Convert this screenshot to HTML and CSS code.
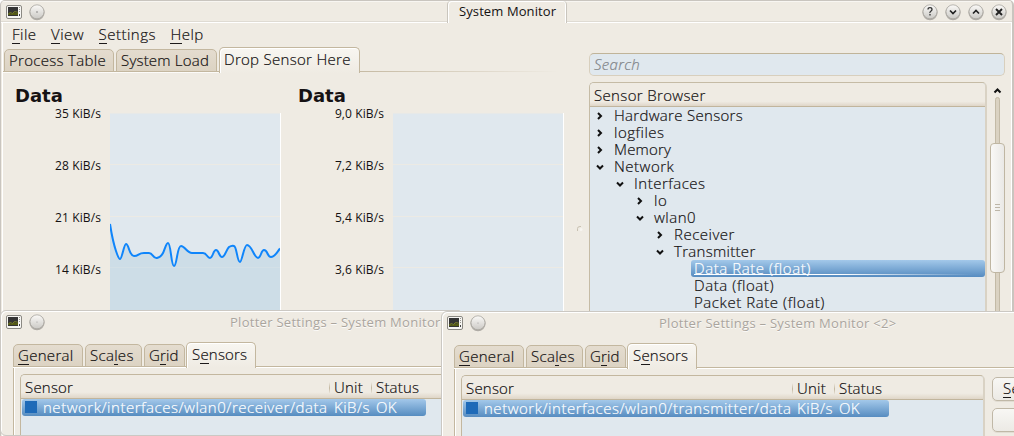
FILE: index.html
```html
<!DOCTYPE html>
<html lang="en">
<head>
<meta charset="utf-8">
<title>System Monitor</title>
<link rel="stylesheet" href="styles.css">
</head>
<body>
<svg class="defs" width="0" height="0">
  <defs>
    <linearGradient id="ball" x1="0" y1="0" x2="0" y2="1"><stop offset="0" stop-color="#fbfaf8"/><stop offset="1" stop-color="#cbc9c5"/></linearGradient>
    <symbol id="app" viewBox="0 0 16 14">
      <rect x=".5" y=".5" width="15" height="13" rx="1.5" fill="#f7f6f3" stroke="#8b8983"/>
      <rect x="2" y="2" width="10" height="9" fill="#343434"/>
      <path d="M2 9l2-1 2 1 2-2 2 1 2-1v3H2z" fill="#565c16"/>
      <path d="M2.5 8.5l2-1 2 1 2-2 3 .5" fill="none" stroke="#858a28" stroke-width=".8"/>
      <path d="M13.5 2v6" stroke="#98968f" stroke-dasharray="1 1"/><path d="M13.5 9v2" stroke="#444"/>
    </symbol>
    <symbol id="round" viewBox="0 0 18 18">
      <circle cx="9" cy="9.6" r="7.6" fill="#8e8b85" opacity=".65"/>
      <circle cx="9" cy="8.8" r="7" fill="url(#ball)" stroke="#aaa7a1" stroke-width=".8"/>
    </symbol>
    <symbol id="right" viewBox="0 0 8 8"><path d="M2 1l3 3-3 3" fill="none" stroke="#111" stroke-width="2"/></symbol>
    <symbol id="down" viewBox="0 0 8 8"><path d="M1 2.5l3 3 3-3" fill="none" stroke="#111" stroke-width="2"/></symbol>
  </defs>
</svg>
<main class="desktop">
  <section class="window main">
    <header class="titlebar">
      <svg class="app"><use href="#app"/></svg>
      <svg class="ball"><use href="#round"/><circle cx="9" cy="9" r=".7" fill="#666"/></svg>
      <div class="title-tab"><span>System Monitor</span></div>
      <div class="controls">
        <svg class="ball"><use href="#round"/><path d="M7 6.5q0-1.8 2-1.8t2 1.8q0 1-1.2 1.7T9 10M9 11v1.5" fill="none" stroke="#333" stroke-width="1.3"/></svg>
        <svg class="ball"><use href="#round"/><path d="M6 7.5l3 3 3-3" fill="none" stroke="#222" stroke-width="1.7"/></svg>
        <svg class="ball"><use href="#round"/><path d="M6 10.5l3-3 3 3" fill="none" stroke="#222" stroke-width="1.7"/></svg>
        <svg class="ball"><use href="#round"/><path d="M6 6l6 6M12 6l-6 6" fill="none" stroke="#222" stroke-width="1.9"/></svg>
      </div>
    </header>
    <div class="body">
      <div class="left">
        <nav class="menu"><span><u>F</u>ile</span><span><u>V</u>iew</span><span><u>S</u>ettings</span><span><u>H</u>elp</span></nav>
        <div class="tabs main-tabs">
          <div class="tab t1">Process Table</div><div class="tab t2">System Load</div><div class="tab on t3">Drop Sensor Here</div>
        </div>
        <div class="charts">
          <article class="chart">
            <h2>Data</h2>
            <div class="plot-row">
              <div class="axis"><span>35 KiB/s</span><span>28 KiB/s</span><span>21 KiB/s</span><span>14 KiB/s</span></div>
              <svg class="plot" width="171" height="200">
                <rect y=".5" width="170" height="200" fill="#e0e8ee"/>
                <path d="M0 51.5h170M0 103.5h170M0 154.5h170" stroke="#eceae4"/>
                <path d="M0 111C2 124 4 132 6 138C8 144 9 146 10 146C12 146 14 131 16 131C19 131 19 143 24 143C29 143 28 140 34 140H39C43 140 43 146 47 145Q51 144 53 140C55 136 56 130 58 130C61 130 61 153 64 153C67 153 67 133 71 133C75 133 77 140 82 140H93C97 140 97 145 100 145C103 145 103 137 106 137C109 137 109 144 112 144C115 144 116 137 119 134Q122 132 124 133C127 134 127 149 130 149C132 149 134 132 137 132C142 132 144 145 148 145C151 145 151 137 154 137C158 137 157 144 161 144C165 144 167 139 170 135.500V200H0z" fill="#cddde7"/>
                <path d="M0 154.500h170" stroke="#d3e0e7"/>
                <path d="M0 111C2 124 4 132 6 138C8 144 9 146 10 146C12 146 14 131 16 131C19 131 19 143 24 143C29 143 28 140 34 140H39C43 140 43 146 47 145Q51 144 53 140C55 136 56 130 58 130C61 130 61 153 64 153C67 153 67 133 71 133C75 133 77 140 82 140H93C97 140 97 145 100 145C103 145 103 137 106 137C109 137 109 144 112 144C115 144 116 137 119 134Q122 132 124 133C127 134 127 149 130 149C132 149 134 132 137 132C142 132 144 145 148 145C151 145 151 137 154 137C158 137 157 144 161 144C165 144 167 139 170 135.500" fill="none" stroke="#0f85fb" stroke-width="2"/>
                <path d="M170.500 0v200" stroke="#fff"/>
              </svg>
            </div>
          </article>
          <article class="chart">
            <h2>Data</h2>
            <div class="plot-row">
              <div class="axis"><span>9,0 KiB/s</span><span>7,2 KiB/s</span><span>5,4 KiB/s</span><span>3,6 KiB/s</span></div>
              <svg class="plot" width="171" height="200">
                <rect y=".5" width="170" height="200" fill="#e0e8ee"/>
                <path d="M0 51.500h170M0 103.500h170M0 154.500h170" stroke="#eceae4"/>
                <path d="M170.500 0v200" stroke="#fff"/>
              </svg>
            </div>
          </article>
        </div>
      </div>
      <svg class="splitter" width="12" height="8"><path d="M1.500 6V3.500q0-2 2.500-2h1" fill="none" stroke="#c9c2b2"/><circle cx="5" cy="4.500" r="1.500" fill="#f7f5f1"/></svg>
      <div class="browser">
        <div class="search">Search</div>
        <div class="tree-area">
          <div class="tree">
            <div class="tree-head">Sensor Browser</div>
            <div class="row d0"><svg><use href="#right"/></svg><span class="r1">Hardware Sensors</span></div>
            <div class="row d0"><svg><use href="#right"/></svg><span class="r2">logfiles</span></div>
            <div class="row d0"><svg><use href="#right"/></svg><span class="r3">Memory</span></div>
            <div class="row d0"><svg><use href="#down"/></svg><span class="r4">Network</span></div>
            <div class="row d1"><svg><use href="#down"/></svg><span class="r5">Interfaces</span></div>
            <div class="row d2"><svg><use href="#right"/></svg><span>lo</span></div>
            <div class="row d2"><svg><use href="#down"/></svg><span class="r6">wlan0</span></div>
            <div class="row d3"><svg><use href="#right"/></svg><span class="r7">Receiver</span></div>
            <div class="row d3"><svg><use href="#down"/></svg><span class="r8">Transmitter</span></div>
            <div class="row leaf sel"><span class="r9">Data Rate (float)</span></div>
            <div class="row leaf"><span class="r10">Data (float)</span></div>
            <div class="row leaf"><span class="r11">Packet Rate (float)</span></div>
          </div>
          <svg class="scroll" width="20" height="232">
            <defs><linearGradient id="th"><stop offset="0" stop-color="#faf9f7"/><stop offset="1" stop-color="#e9e8e5"/></linearGradient></defs>
            <path d="M5.500 10.500l3-3 3 3" fill="none" stroke="#111" stroke-width="2"/>
            <rect x="6.500" y="15.500" width="4" height="230" rx="2" fill="#dad2c2" stroke="#c3baa6"/>
            <rect x="1.500" y="61.500" width="14" height="129" rx="3.500" fill="url(#th)" stroke="#bfb6a2"/>
            <path d="M6 122.500h5M6 125.500h5M6 128.500h5" stroke="#bdb6a8"/>
          </svg>
        </div>
      </div>
      <svg class="edge" width="3" height="12"><path d="M1.500 1v10" stroke="#777" stroke-dasharray="1 2"/></svg>
    </div>
  </section>

  <section class="window dialog first">
    <header class="dialog-title">
      <svg class="app"><use href="#app"/></svg>
      <svg class="ball"><use href="#round"/><circle cx="9" cy="9" r=".6" fill="#999"/></svg>
      <span>Plotter Settings – System Monitor</span>
    </header>
    <div class="tabs dialog-tabs">
      <div class="tab g"><u>G</u>eneral</div><div class="tab s">Sca<u>l</u>es</div><div class="tab i">G<u>r</u>id</div><div class="tab on n">S<u>e</u>nsors</div>
    </div>
    <div class="page">
      <div class="list">
        <div class="list-head"><span class="c-name">Sensor</span><span class="c-unit">Unit</span><span class="c-status">Status</span></div>
        <div class="item"><i></i><span class="path">network/interfaces/wlan0/receiver/data</span><span class="unit">KiB/s</span><span class="ok">OK</span></div>
      </div>
    </div>
  </section>

  <section class="window dialog second">
    <header class="dialog-title">
      <svg class="app"><use href="#app"/></svg>
      <svg class="ball"><use href="#round"/><circle cx="9" cy="9" r=".6" fill="#999"/></svg>
      <span>Plotter Settings – System Monitor &lt;2&gt;</span>
    </header>
    <div class="tabs dialog-tabs">
      <div class="tab g"><u>G</u>eneral</div><div class="tab s">Sca<u>l</u>es</div><div class="tab i">G<u>r</u>id</div><div class="tab on n">S<u>e</u>nsors</div>
    </div>
    <div class="page">
      <div class="list">
        <div class="list-head"><span class="c-name">Sensor</span><span class="c-unit">Unit</span><span class="c-status">Status</span></div>
        <div class="item"><i></i><span class="path">network/interfaces/wlan0/transmitter/data</span><span class="unit">KiB/s</span><span class="ok">OK</span></div>
      </div>
      <div class="buttons"><div class="button"><u>S</u>e</div><div class="button"></div></div>
    </div>
  </section>
</main>
</body>
</html>
```
FILE: styles.css
```css
* { box-sizing: border-box; }
body { margin: 0; background: #efebe3; color: #141112; font: 300 15px/17px "Open Sans", "Noto Sans", sans-serif; letter-spacing: .3px; -webkit-text-stroke: .2px; }
.defs { display: block; }
svg { flex: none; }
u { text-decoration: none; background: linear-gradient(#1d1a1a, #1d1a1a) 0 100% / 100% 1px no-repeat; padding-bottom: 0; }
.desktop { position: relative; width: 1014px; height: 436px; overflow: hidden; background: #fff; }
.window { position: absolute; overflow: hidden; background: #efebe3; white-space: nowrap; }
.main { left: 0; top: 0; width: 1014px; height: 450px; border: 1px solid #c9c5bf; border-right-width: 2px; border-radius: 5px; }
.app { width: 16px; height: 14px; }
.ball { width: 18px; height: 18px; }

.titlebar { display: flex; height: 22px; padding: 0 2px 0 5px; border-bottom: 1px solid #fff; box-shadow: inset 0 -1px #dfdbd3, inset 0 1px #f8f6f2; }
.titlebar > .app { margin: 4px 6px 0 0; }
.titlebar .ball { margin-top: 2px; }
.title-tab { width: 120px; height: 22px; margin: 0 auto 0 401px; padding-left: 11px; border: 1px solid #c9c5bd; border-width: 0 1px; border-radius: 4px 4px 0 0; background: #efebe3; box-shadow: inset 1px 1px #fff, inset -1px 0 #fff; font: 400 13px/21px "Open Sans", sans-serif; letter-spacing: .1px; -webkit-text-stroke: 0; }
.controls { display: flex; gap: 5px; margin-right: 2px; }

.body { display: flex; height: 420px; border-left: 1px solid #fff; border-right: 1px solid #fff; margin-left: 1px; }
.left { width: 573px; flex: none; }
.menu { display: flex; gap: 14.4px; padding: 3px 0 0 9px; height: 24px; line-height: 17px; letter-spacing: .5px; }
.tabs { display: flex; align-items: flex-end; gap: 2px; }
.main-tabs { height: 26px; padding-left: 1px; background: linear-gradient(90deg, #c3b79f 60%, #efebe3 97%) 0 24px / 100% 1px no-repeat, linear-gradient(#fff, #f8f6f2) 0 25px / 60% 1px no-repeat; }
.tab { height: 23px; margin-bottom: 1px; padding: 2px 0 0 4px; border: 1px solid #c3b79f; border-radius: 5px 5px 0 0; background: linear-gradient(#e4dccf, #dcd3c3); line-height: 17px; }
.tab.on { height: 26px; margin-bottom: 0; border-bottom: 0; background: linear-gradient(#f8f6f1, #efebe3); box-shadow: inset 1px 1px #fff; padding-top: 3px; }
.t1 { width: 110px; }
.t2 { width: 101px; letter-spacing: .2px; }
.t3 { width: 141px; }
.charts { display: flex; padding: 11px 0 0 12px; }
.chart { width: 283px; flex: none; }
.chart h2 { margin: 0; height: 29px; font: 700 18px/24px "DejaVu Sans", sans-serif; letter-spacing: 0; color: #161214; -webkit-text-stroke: 0; }
.plot-row { display: flex; gap: 9px; }
.axis { width: 86px; text-align: right; font: 400 12px/52px "Open Sans", sans-serif; letter-spacing: .1px; margin-top: -25px; -webkit-text-stroke: 0; }
.axis span { display: block; height: 52px; }
.splitter { margin-top: 202px; }
.browser { width: 420px; flex: none; padding-top: 30px; }
.search { width: 416px; height: 23px; margin-left: 1px; padding: 2px 4px; border: 1px solid #d8cfbd; border-top-color: #c0b499; border-radius: 5px; background: #e0e8ee; color: #818589; font-style: italic; }
.tree-area { display: flex; margin: 6px 0 0 1px; }
.tree { width: 398px; height: 350px; flex: none; border: 1px solid #c5bba5; border-right: 2px solid #d9d2c4; border-radius: 5px 5px 0 0; background: #e0e8ee; }
.tree-head { height: 24px; padding: 4px 0 0 4px; border-radius: 4px 4px 0 0; background: linear-gradient(#efebe3 80%, #dfd6c8); border-bottom: 1px solid #c1b59d; letter-spacing: .35px; }
.row { display: flex; height: 17px; line-height: 17px; letter-spacing: .5px; }
.row svg { width: 8px; height: 8px; margin: 5px 10px 0 0; }
.r1, .r8 { letter-spacing: .3px; }
.r3 { letter-spacing: .2px; }
.d0 { padding-left: 6px; }
.d1 { padding-left: 26px; }
.d2 { padding-left: 46px; }
.d3 { padding-left: 66px; }
.leaf { padding-left: 104px; letter-spacing: .57px; }
.sel { margin-left: 101px; padding-left: 3px; border-radius: 3px; color: #fff; background: linear-gradient(90deg, #fff 50%, transparent 95%) 3px 14px / 100% 1px no-repeat, linear-gradient(#a3c8ea, #568cc0); }
.scroll { margin-left: 2px; }
.edge { margin-top: 191px; margin-left: 2px; position: relative; left: 1px; }

.dialog { border: 1px solid #cbc8c3; border-radius: 6px 0 0 6px; box-shadow: inset 1px 1px #fff; }
.first { left: 0; top: 310px; width: 460px; height: 126px; }
.second { left: 441px; top: 311px; width: 590px; height: 140px; }
.dialog-title { display: flex; height: 31px; padding: 4px 0 0 5px; color: #aaa59e; font: 400 13px/14px "Open Sans", sans-serif; letter-spacing: .28px; text-shadow: 0 1px #fbfaf8; -webkit-text-stroke: 0; }
.dialog-title .ball { margin: -2px 0 0 6px; }
.dialog-title span { margin-left: 184px; }
.second .dialog-title span { margin-left: 172px; }
.dialog-tabs { height: 26px; padding-left: 12px; background: linear-gradient(#c3b79f, #c3b79f) 12px 24px / 100% 1px no-repeat, linear-gradient(#fff, #fff) 12px 25px / 100% 1px no-repeat; }
.g { width: 70px; }
.s { width: 57px; }
.i { width: 41px; letter-spacing: .1px; }
.n { width: 70px; padding-left: 5px; letter-spacing: .2px; }
.dialog-tabs .n { margin-left: -1px; }
.page { display: flex; margin-left: 12px; padding: 6px 0 0 6px; border-left: 1px solid #c3b79f; box-shadow: inset 1px 0 #fff; }
.list { width: 524px; height: 90px; flex: none; border: 1px solid #c3b79f; border-radius: 5px 5px 0 0; border-right: 2px solid #d9d2c4; background: #e0e8ee; }
.list-head { display: flex; height: 24px; padding: 3px 0 0 4px; border-radius: 4px 4px 0 0; border-bottom: 1px solid #c1b59d; background: linear-gradient(#efebe3 75%, #dfd6c8); line-height: 18px; letter-spacing: .2px; }
.c-name { width: 304px; }
.c-unit { width: 42px; }
.c-unit, .c-status { padding-left: 5px; background: linear-gradient(#efebe3, #c3b79f 50%, #efebe3) 0 4px / 1px 12px no-repeat; }
.second .c-name { width: 326px; }
.item { display: flex; width: 404px; height: 17px; border-radius: 3px; background: linear-gradient(#a3c8ea, #568cc0); color: #fff; margin-left: 1px; letter-spacing: .5px; }
.second .item { width: 426px; }
.item i { width: 12px; height: 12px; margin: 2px 6px 0 3px; background: #1e6ab8; }
.path { width: 291px; letter-spacing: .52px; }
.second .path { width: 313px; }
.unit { width: 42px; }
.ok { letter-spacing: .2px; }
.buttons { padding: 2px 0 0 7px; display: grid; gap: 7px; align-content: start; }
.button { width: 60px; height: 24px; padding: 2px 0 0 10px; border: 1px solid #c0b8a7; border-radius: 5px; background: linear-gradient(#f8f7f4, #eceae5); box-shadow: 0 1px #e1dcd2; }
```
